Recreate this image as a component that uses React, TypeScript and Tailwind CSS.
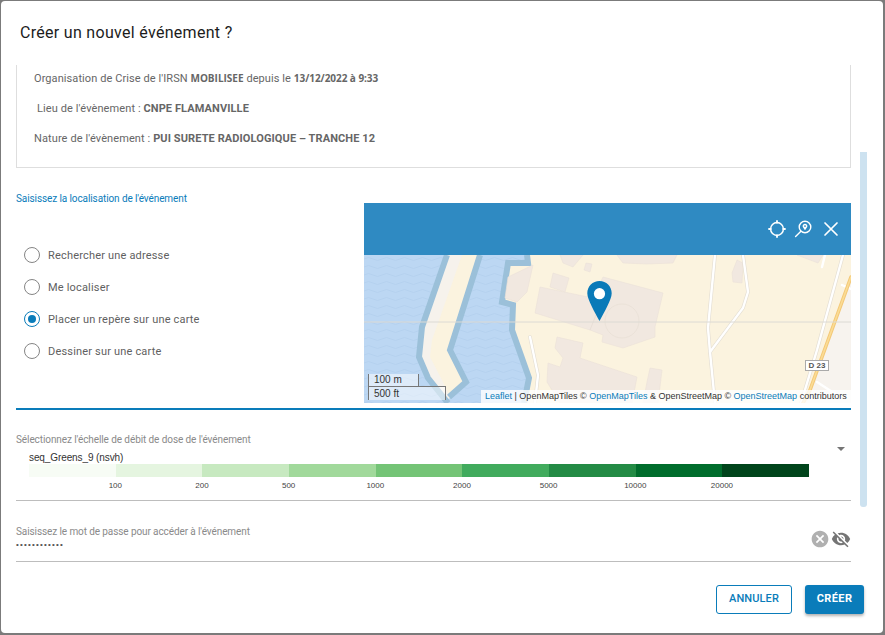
import { MdCancel, MdVisibilityOff } from "react-icons/md";

const greens = ["bg-[#f7fcf5]", "bg-[#e5f5e0]", "bg-[#c7e9c0]", "bg-[#a1d99b]", "bg-[#74c476]", "bg-[#41ab5d]", "bg-[#238b45]", "bg-[#006d2c]", "bg-[#00441b]"];
const ticks = ["100", "200", "500", "1000", "2000", "5000", "10000", "20000"];
const options = ["Rechercher une adresse", "Me localiser", "Placer un repère sur une carte", "Dessiner sur une carte"];

function Radio({ label, checked }: { label: string; checked?: boolean }) {
  return (
    <div className="flex h-[32px] items-center gap-[8px]">
      <span className={`flex h-[16px] w-[16px] items-center justify-center rounded-full border-[1.5px] ${checked ? "border-[#0a7cba]" : "border-[#858585]"}`}>
        {checked && <span className="h-[8px] w-[8px] rounded-full bg-[#0a7cba]" />}
      </span>
      <span className="mt-[2px] text-[11px] tracking-[0.18px] text-[#5f5f5f]">{label}</span>
    </div>
  );
}

function MapDrawing() {
  return (
    <svg viewBox="0 0 487 148" className="block h-[148px] w-[487px]">
      <defs>
        <pattern id="waves" width="18" height="8" patternUnits="userSpaceOnUse">
          <path d="M0 4 Q4.5 1 9 4 T18 4" fill="none" stroke="#b2cfee" strokeWidth="0.8" />
        </pattern>
      </defs>
      <rect width="487" height="148" fill="#fbf3df" />
      {/* eau */}
      <path d="M0 0H163V8H144L138 47L149 50L148 75L165 123L160 148H0Z" fill="#bcd7f3" />
      <path d="M0 0H163V8H144L138 47L149 50L148 75L165 123L160 148H0Z" fill="url(#waves)" />
      {/* digue et plage */}
      <path d="M83 0H116L86 95L102 127L86 143L81 145L64 123L55 102L58 72Z" fill="#fbf3df" />
      <path d="M83 0H98L68 85L66 102L78 125L86 143L81 145L64 123L55 102L58 72Z" fill="#f6f2ec" />
      <path d="M83 0L58 72L55 102L64 123L84 148" fill="none" stroke="#9bc0d9" strokeWidth="6" />
      <path d="M116 0L86 95L102 127L85 142" fill="none" stroke="#9bc0d9" strokeWidth="6" />
      <path d="M163 0L164 8H144L138 47L149 50L148 75L165 123L160 148" fill="none" stroke="#9bc0d9" strokeWidth="6" />
      {/* terre à droite */}
      <path d="M487 22L443 148H487Z" fill="#f7f3ee" />
      {/* bâtiments */}
      <g fill="#f1e8e0" stroke="#ebe1d8" strokeWidth="0.6">
        <path d="M176 32L229 43L239 22L299 38L291 72L291 82L259 93L238 87L239 80L226 75L171 58Z" />
        <path d="M193 82L219 88L216 103L273 122L268 148H196L183 127L184 108L196 112L199 103L191 93Z" />
        <path d="M144 22L169 10L163 37L153 47L141 43Z" />
        <path d="M189 18L205 23L201 37L186 32Z" />
        <path d="M196 0H219L209 12L199 8Z" />
        <path d="M253 0H313L309 8L283 9L259 8Z" />
        <path d="M368 18L373 5L379 8L378 28L369 27Z" />
        <path d="M433 0H459L454 8Z" />
        <path d="M283 127L286 113L298 115L294 148H279Z" />
        <path d="M222 8L228 9L226 17L220 15Z" />
      </g>
      <circle cx="258" cy="66" r="17" fill="none" stroke="#e8dfd6" strokeWidth="0.8" />
      <path d="M226 75L232 60" stroke="#e6dcd3" strokeWidth="0.8" />
      {/* routes */}
      <g fill="none" strokeLinecap="round">
        <g stroke="#e3ddd2" strokeWidth="3.6">
          <path d="M351 0L344 73L346 97L351 148" />
          <path d="M379 0L384 37L379 53L346 97" />
          <path d="M166 82L174 120L171 148" />
          <path d="M479 0L453 95L437 148" />
        </g>
        <g stroke="#ffffff" strokeWidth="2.4">
          <path d="M351 0L344 73L346 97L351 148" />
          <path d="M379 0L384 37L379 53L346 97" />
          <path d="M166 82L174 120L171 148" />
          <path d="M479 0L453 95L437 148" />
          <path d="M458 12L461 0" />
          <path d="M453 127L476 142" />
          <path d="M487 34L478 30" />
        </g>
        <path d="M487 22L446 135L439 148" stroke="#f3c877" strokeWidth="3.6" />
        <path d="M487 22L446 135L439 148" stroke="#fbdc95" strokeWidth="1.6" />
      </g>
      <path d="M0 67H487" stroke="#dcdad4" strokeWidth="1" />
      {/* repère */}
      <path d="M235.5 26C228.7 26 223.3 31.4 223.3 38.2C223.3 44.5 231 57.5 235.5 66C240 57.5 247.7 44.5 247.7 38.2C247.7 31.4 242.3 26 235.5 26Z" fill="#0a7ab8" />
      <circle cx="235.5" cy="38.7" r="5.6" fill="#ffffff" />
    </svg>
  );
}

function HeaderIcons() {
  return (
    <div className="flex items-center">
      <svg viewBox="0 0 20 20" className="h-[20px] w-[20px]" fill="none" stroke="#ffffff" strokeWidth="1.5" strokeLinecap="round">
        <circle cx="10" cy="10" r="6.4" />
        <path d="M10 2V3.8M10 16.2V18M2 10H3.8M16.2 10H18" strokeWidth="1.8" />
      </svg>
      <svg viewBox="0 0 20 20" className="ml-[6px] h-[20px] w-[20px]" fill="none" stroke="#ffffff" strokeWidth="1.4" strokeLinecap="round">
        <circle cx="12" cy="8" r="5.8" />
        <path d="M7.9 12.2L2.6 17.4" />
        <path d="M12 4.8C10.6 4.8 9.6 5.8 9.6 7.1C9.6 8.4 11.1 10 12 11.2C12.9 10 14.4 8.4 14.4 7.1C14.4 5.8 13.4 4.8 12 4.8Z" fill="#ffffff" stroke="none" />
        <circle cx="12" cy="7.1" r="0.9" fill="#2f8ac2" stroke="none" />
      </svg>
      <svg viewBox="0 0 20 20" className="ml-[8px] h-[20px] w-[20px]" fill="none" stroke="#ffffff" strokeWidth="1.7" strokeLinecap="round">
        <path d="M4 4L16 16M16 4L4 16" />
      </svg>
    </div>
  );
}

export default function App() {
  return (
    <div className="h-[635px] w-[885px] overflow-hidden bg-[#7b7b7b] pt-px pl-px font-['Roboto',sans-serif]">
      <div className="relative flex h-[632px] w-[882px] flex-col rounded-[4px] bg-white">
        <h2 className="flex h-[64px] items-center pl-[19px] text-[16px] font-normal tracking-[0.3px] text-[#1c1c1c]">
          Créer un nouvel événement ?
        </h2>

        {/* Scrollbar */}
        <div className="absolute top-[151px] left-[859px] h-[355px] w-[7px] rounded-b-[3px] bg-[#cde2f0]" />

        <div className="w-[850px] pl-[15px]">
          {/* Infos crise */}
          <div className="flex h-[103px] flex-col gap-[10px] border-x border-b border-[#dedede] pt-[3px] pl-[17px] text-[11px] text-[#666666]">
            <p className="leading-[20px] tracking-[0.08px]">
              Organisation de Crise de l'IRSN <b className="font-['Open_Sans',sans-serif] text-[10px] font-bold tracking-normal">MOBILISEE</b> depuis le{" "}
              <b className="font-['Open_Sans',sans-serif] text-[10px] font-bold tracking-[-0.05px]">13/12/2022 à 9:33</b>
            </p>
            <p className="pl-[3px] leading-[20px] tracking-[0.1px]">
              Lieu de l'évènement : <b className="font-bold">CNPE FLAMANVILLE</b>
            </p>
            <p className="leading-[20px] tracking-[0.1px]">
              Nature de l'évènement : <b className="font-bold">PUI SURETE RADIOLOGIQUE – TRANCHE 12</b>
            </p>
          </div>

          <div className="mt-[25px] h-[10px] text-[10px] leading-[12px] tracking-[-0.1px] text-[#0a7cba]">
            Saisissez la localisation de l'événement
          </div>

          {/* Localisation */}
          <div className="flex h-[200px]">
            <div className="w-[348px] pt-[36px] pl-[8px]">
              {options.map((o) => (
                <Radio key={o} label={o} checked={o.startsWith("Placer")} />
              ))}
            </div>
            <div className="relative w-[487px]">
              <div className="flex h-[52px] items-center justify-end bg-[#2f8ac2] pr-[10px]">
                <HeaderIcons />
              </div>
              <MapDrawing />
              <div className="absolute top-[171px] left-[4px] w-[51px] border-x border-[#777777] bg-white/50 pl-[5px] font-['Liberation_Sans',sans-serif] text-[10px] leading-[12px] text-[#333333]">
                100 m
              </div>
              <div className="absolute top-[183px] left-[4px] h-[14px] w-[78px] border-x border-t border-[#777777] bg-white/50 pl-[5px] font-['Liberation_Sans',sans-serif] text-[10px] leading-[13px] text-[#333333]">
                500 ft
              </div>
              <div className="absolute top-[157px] left-[441px] flex h-[11px] w-[24px] items-center justify-center border border-[#aaaaaa] bg-white font-['Liberation_Sans',sans-serif] text-[8px] font-bold text-[#555555]">
                D 23
              </div>
              <div className="absolute right-0 bottom-0 h-[13px] w-[370px] bg-white/80 pl-[4px] font-['Liberation_Sans',sans-serif] text-[9px] leading-[13px] whitespace-nowrap text-[#333333]">
                <span className="text-[#0a7cba]">Leaflet</span> | OpenMapTiles © <span className="text-[#0a7cba]">OpenMapTiles</span> &amp; OpenStreetMap ©{" "}
                <span className="text-[#0a7cba]">OpenStreetMap</span> contributors
              </div>
            </div>
          </div>

          <div className="mt-[5px] h-[2px] bg-[#0a7cba]" />

          {/* Echelle */}
          <div className="relative mt-[24px] border-b border-[#bdbdbd] pb-[8px]">
            <div className="text-[10px] leading-[12px] tracking-[-0.09px] text-[#8a8a8a]">
              Sélectionnez l'échelle de débit de dose de l'événement
            </div>
            <div className="mt-[6px] pl-[13px] font-['Liberation_Sans',sans-serif] text-[10px] leading-[12px] tracking-[-0.1px] text-[#333333]">seq_Greens_9 (nsvh)</div>
            <div className="ml-[13px] flex h-[13px] w-[780px]">
              {greens.map((g) => (
                <div key={g} className={`flex-1 ${g}`} />
              ))}
            </div>
            <div className="mt-[3px] ml-[56px] flex font-['Liberation_Sans',sans-serif] text-[8px] leading-[12px] text-[#444444]">
              {ticks.map((t) => (
                <span key={t} className="w-[86.67px] text-center">
                  {t}
                </span>
              ))}
            </div>
            <span className="absolute top-[13px] right-[6px] h-0 w-0 border-x-[4px] border-t-[4px] border-x-transparent border-t-[#757575]" />
          </div>

          {/* Mot de passe */}
          <div className="relative mt-[25px] h-[36px] border-b border-[#bdbdbd]">
            <div className="text-[10px] leading-[12px] tracking-[-0.1px] text-[#8a8a8a]">
              Saisissez le mot de passe pour accéder à l'événement
            </div>
            <div className="font-['Liberation_Sans',sans-serif] text-[8px] leading-[14px] tracking-[1.2px] text-[#555555]">••••••••••••</div>
            <div className="absolute top-[3px] right-0 flex items-center">
              <MdCancel className="h-[20px] w-[20px] text-[#b0b0b0]" />
              <MdVisibilityOff className="ml-px h-[20px] w-[20px] text-[#757575]" />
            </div>
          </div>
        </div>

        {/* Actions */}
        <div className="mt-auto flex justify-end gap-[13px] pr-[19px] pb-[19px]">
          <button className="h-[29px] w-[76px] rounded-[3px] border border-[#0a7cba] text-[11px] font-medium tracking-[0.1px] text-[#0a7cba]">ANNULER</button>
          <button className="h-[29px] w-[59px] rounded-[3px] bg-[#0a7cba] text-[11px] font-bold tracking-[0.4px] text-white shadow-[0_2px_3px_rgba(0,0,0,0.3)]">CRÉER</button>
        </div>
      </div>
    </div>
  );
}
